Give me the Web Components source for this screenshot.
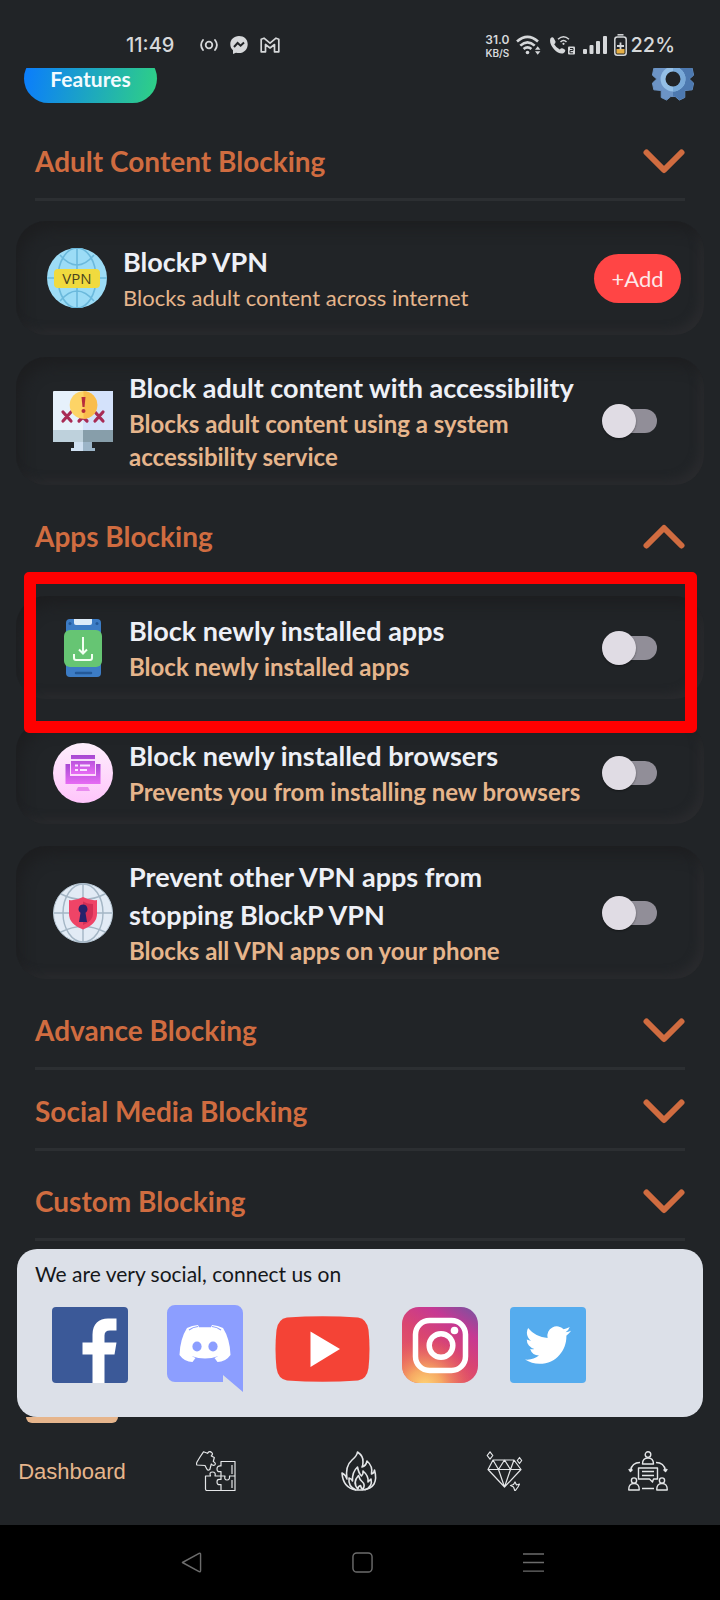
<!DOCTYPE html>
<html lang="en">
<head>
<meta charset="utf-8">
<meta name="viewport" content="width=device-width, initial-scale=1">
<title>BlockP</title>
<style>
  :root {
    --bg: #212427;
    --orange: #d06c40;
    --sand: #e6b58c;
    --line: #2c2f32;
  }
  body {
    margin: 0;
    min-height: 100vh;
    background: var(--bg);
    font-family: Lato, "Liberation Sans", sans-serif;
  }
</style>
</head>
<body>
<blockp-screen></blockp-screen>

<script>
const ICONS = {
  gear: `<svg viewBox="0 0 48 48"><path id="g" fill="#6c94c6" stroke="#6c94c6" stroke-linejoin="round" d="M45.500 20l-4.500 4 4.500 4.300-1.500 7-7.700.7v7.300L30.700 46l-4.400-3.700h-4.600L17.300 46l-5.600-2.700V36L4 35.300l-1.500-7L7 24l-4.500-4L4 12.700l7.700-.7V4.700L17.300 2l4.400 3.700h4.600L30.700 2l5.600 2.700V12l7.700.7z"/>
    <path d="M26.300 42.300l4.400 3.700 5.600-2.700V36l7.700-.7 1.500-7L41 24l4.500-4-1.500-7.300-7.700-.7V4.700L30.700 2l-4.400 3.700H24v36.600z" fill="#4d79b0"/>
    <circle cx="24" cy="24" r="13" fill="#94bfe6"/><path d="M24 11a13 13 0 0 1 0 26z" fill="#79a9d8"/>
    <circle cx="24" cy="24" r="7.800" fill="#212427"/></svg>`,
  hotspot: `<svg viewBox="0 0 18 16" fill="none" stroke="currentColor" stroke-width="1.800" stroke-linecap="round"><circle cx="9" cy="8" r="3.300"/><path d="M3 3Q-.8 8 3 13M15 3Q18.800 8 15 13"/></svg>`,
  messenger: `<svg viewBox="0 0 18 18"><path fill="currentColor" d="M9 0C3.800 0 .3 3.600.3 8.300c0 2.600 1 4.600 2.700 6V18l3-1.300q1.400.4 3 .4c5.200 0 8.700-3.700 8.700-8.800S14.200 0 9 0z"/><path d="M4 11l3.600-4 3 2.700L14 6.500" fill="none" stroke="#212427" stroke-width="2"/></svg>`,
  gmail: `<svg viewBox="0 0 20 16" fill="none" stroke="currentColor" stroke-width="1.700" stroke-linejoin="round"><path d="M1.200 14.800V2.200L4 1.200l6 5 6-5 2.800 1v12.600H14.500V7.500L10 11 5.500 7.500v7.300z"/></svg>`,
  wifi: `<svg viewBox="0 0 26 20" fill="none" stroke="currentColor" stroke-width="2.600"><path d="M1 6.500Q11.500-2.800 22 6.500M4.300 10.600Q11.500 4 18.700 10.600M7.600 14Q11.500 10.600 15.400 14"/><circle cx="11.500" cy="17.500" r="1.800" fill="currentColor" stroke="none"/><path d="M19 14.800l2.700-3.500 2.700 3.500zM19 16.300l2.700 3.500 2.700-3.500z" fill="currentColor" stroke="none"/></svg>`,
  call: `<svg viewBox="0 0 27 20"><path fill="currentColor" d="M1.500 3.200Q3.500 1.500 4.800 3.300L6.500 6.500Q6.800 8 5.200 9.200q2 3.600 5.600 5.200Q12.300 12.600 14 13.500l2 1.300q1 1.800-1.600 3.500Q10 19.500 5 14.200-.3 8 1.500 3.200z"/><g fill="none" stroke="currentColor" stroke-width="1.500"><path d="M9 4.300Q14.500-.8 20 4.300M11.500 7Q14.500 4 17.500 7"/></g><circle cx="14.500" cy="8.800" r="1.100" fill="currentColor"/><rect x="19" y="11.500" width="7" height="8" rx="1" fill="currentColor"/><path d="M21 13.500h3v2h-3v2.300h3" fill="none" stroke="#212427"/></svg>`,
  signal: `<svg viewBox="0 0 24 18" fill="currentColor"><rect y="13" width="4" height="5" rx="1"/><rect x="6.500" y="9" width="4" height="9" rx="1"/><rect x="13" y="5" width="4" height="13" rx="1"/><rect x="20" width="4" height="18" rx="1"/></svg>`,
  battery: `<svg viewBox="0 0 13 22"><path d="M3.500.8h6" stroke="currentColor" stroke-width="1.500"/><rect x=".8" y="3" width="11.400" height="18.200" rx="2.500" fill="none" stroke="currentColor" stroke-width="1.500"/><path d="M2.500 15h8v4.500h-8z" fill="#e5ae45"/><path d="M6.500 8.500v7M3 12h7" stroke="currentColor" stroke-width="1.800"/></svg>`,
  vpn: `<svg viewBox="0 0 60 60"><circle cx="30" cy="30" r="30" fill="#9cdcf6"/><g fill="none" stroke="#6bb9dc" stroke-width="1.600"><ellipse cx="30" cy="30" rx="19" ry="30"/><path d="M30 0v60M0 30h60M13 7Q30 27 47 7M13 53Q30 33 47 53"/></g><rect x="7" y="21" width="46" height="19" rx="4" fill="#f0da3e"/><text x="30" y="36" text-anchor="middle" font-family="Open Sans, sans-serif" font-size="15" fill="#4a4320">VPN</text></svg>`,
  monitor: `<svg viewBox="0 0 60 60"><rect width="60" height="51" rx="1" fill="#e6f1fb"/><path d="M30 0h30v39H30z" fill="#d4e2fb"/><path d="M0 39h30v12H0z" fill="#bed1dc"/><path d="M30 39h30v12H30z" fill="#879eaa"/><path d="M21 51h18v6h3v3H18v-3h3z" fill="#d0e1f2"/><path d="M30 51h9v6h3v3H30z" fill="#9cb5c8"/><g fill="none" stroke="#a82b55" stroke-width="3.200" stroke-linecap="round"><path d="M10 21l8 9m0-9l-8 9M42 21l8 9m0-9l-8 9M26 30l4-4 4 4"/></g><circle cx="30.500" cy="14" r="13.800" fill="#fdd466"/><path d="M30.500.2a13.800 13.800 0 0 1 0 27.600z" fill="#f9bd4c"/><path d="M28.500 6h4l-1 10h-2z" fill="#b72c3b"/><circle cx="30.500" cy="20" r="2" fill="#b72c3b"/></svg>`,
  phone: `<svg viewBox="0 0 60 60"><rect x="13" y="1" width="35" height="58" rx="4" fill="#3c7cc5"/><path d="M21 1h18v4q0 2-2 2H23q-2 0-2-2z" fill="#dcebf8"/><circle cx="17" cy="5.500" r="1.500" fill="#235999"/><circle cx="44" cy="5.500" r="1.500" fill="#235999"/><path d="M23 55h15" stroke="#235999" stroke-width="2.500" stroke-linecap="round"/><rect x="11" y="12" width="38" height="37" rx="6" fill="#66c573"/><path d="M30 19v16m-4-3.500l4 4 4-4M21 36v4q0 2 2 2h14q2 0 2-2v-4" fill="none" stroke="#f2fff2" stroke-width="2"/></svg>`,
  browser: `<svg viewBox="0 0 60 60"><linearGradient id="bg" x2="0" y2="1"><stop stop-color="#fdeffc"/><stop offset="1" stop-color="#ffc5fb"/></linearGradient><linearGradient id="fg" x2="0" y2="1"><stop stop-color="#a648d2"/><stop offset="1" stop-color="#e76bf4"/></linearGradient><circle cx="30" cy="30" r="30" fill="url(#bg)"/><path d="M12.500 21H17v12h26V21h4.500v20h-35z" fill="url(#fg)"/><path d="M18 12h24v19H18z" fill="url(#fg)"/><path d="M18 17h24" stroke="#f6dcfa" stroke-width="2"/><path d="M22 22.500h3m2 0h10M22 27h3m2 0h7" stroke="#fae3ff" stroke-width="1.800"/><path d="M25 44h10l2 4H23z" fill="#e98bef"/></svg>`,
  shield: `<svg viewBox="0 0 60 60"><circle cx="30" cy="30" r="29.500" fill="#e2ebf5" stroke="#b9c9d6"/><g fill="none" stroke="#a4b6c5" stroke-width="1.400"><ellipse cx="30" cy="30" rx="20" ry="29"/><path d="M30 1v58M1 30h58M8 11Q30 22 52 11M8 49Q30 38 52 49"/></g><path d="M30 14q7 4 14 3v14q0 10-14 15.500Q16 41 16 31V17q7 1 14-3z" fill="#ef4467"/><path d="M30 18.500q5 2.700 10 2.500v10q0 7-10 11z" fill="#d32f56"/><path d="M30 21.500a4.500 4.500 0 0 1 2.500 8.200L34 39h-8l1.500-9.300A4.500 4.500 0 0 1 30 21.500z" fill="#26226b"/></svg>`,
  facebook: `<svg viewBox="0 -2 76 87"><rect width="76" height="76" rx="4" fill="#3b5998"/><path d="M40.500 76V47.500h-10v-12h10v-8C40.500 17 47 11.500 56 11.500h8.500v12H58q-5.500 0-5.500 5v7h12l-2 12h-10V76z" fill="#fff"/></svg>`,
  discord: `<svg viewBox="0 0 83 87"><path d="M15 0h60a8 8 0 0 1 8 8v79L63 70v7H15a8 8 0 0 1-8-8V8a8 8 0 0 1 8-8z" fill="#8c9eff"/><path d="M27 23q5-2.500 11-3l1 2.300h12l1-2.300q6 .5 11 3 7 11 7.500 27-5 7-13 7l-3-4 4-2q-13.500 5-27 0l4 2-3 4q-8 0-13-7Q20 34 27 23z" fill="#fff"/><path d="M29 25q4-3 9-3.500m23 3.500q-4-3-9-3.500" fill="none" stroke="#8c9eff" stroke-width="1.200"/><ellipse cx="37" cy="41.500" rx="4.600" ry="5" fill="#8c9eff"/><ellipse cx="53" cy="41.500" rx="4.600" ry="5" fill="#8c9eff"/></svg>`,
  youtube: `<svg viewBox="0 -11 95 87"><path d="M12 1.500Q47.500-1 83 1.500 92 3 93.500 14q2 19 0 38Q92 63 83 64.500q-35.500 2.500-71 0Q3 63 1.500 52q-2-19 0-38Q3 3 12 1.500z" fill="#f44336"/><path d="M35.500 15.500L65 33 35.500 51z" fill="#fff"/></svg>`,
  instagram: `<svg viewBox="0 -2 76 87"><linearGradient id="a" x1=".9" y1="0" x2=".25" y2="1"><stop stop-color="#80509f"/><stop offset=".25" stop-color="#c63893"/><stop offset=".55" stop-color="#da4670"/><stop offset="1" stop-color="#e9605c"/></linearGradient><radialGradient id="b" cx=".3" cy="1.050" r=".65"><stop stop-color="#ffd675"/><stop offset=".35" stop-color="#f6a963"/><stop offset="1" stop-color="#e9605c" stop-opacity="0"/></radialGradient><rect width="76" height="76" rx="17" fill="url(#a)"/><rect width="76" height="76" rx="17" fill="url(#b)"/><g fill="none" stroke="#fff" stroke-width="5.500"><rect x="13.500" y="13.500" width="50" height="50" rx="14"/><circle cx="39" cy="38.500" r="11.800"/></g><circle cx="52.500" cy="23.500" r="3.800" fill="#fff"/></svg>`,
  twitter: `<svg viewBox="0 -2 76 87"><rect width="76" height="76" rx="4" fill="#55acee"/><path transform="translate(15 15) scale(1.920)" d="M23.950 4.570a10 10 0 0 1-2.820.770 4.960 4.960 0 0 0 2.160-2.720c-.95.550-2 .960-3.130 1.180a4.920 4.920 0 0 0-8.380 4.480C7.690 8.090 4.070 6.130 1.640 3.160a4.820 4.820 0 0 0-.67 2.480c0 1.710.87 3.210 2.190 4.100a4.900 4.900 0 0 1-2.230-.620v.06a4.920 4.920 0 0 0 3.950 4.830 5 5 0 0 1-2.210.08 4.940 4.940 0 0 0 4.600 3.420A9.870 9.870 0 0 1 0 19.540a14 14 0 0 0 7.550 2.210c9.050 0 14-7.500 14-13.990 0-.21 0-.420-.02-.630a9.940 9.940 0 0 0 2.460-2.550z" fill="#fff"/></svg>`,
  puzzle: `<svg viewBox="0 0 40 40" fill="none" stroke="currentColor" stroke-width="1.200" stroke-linejoin="round"><path d="M25 10.500h14v29H11q-1.500 0-1.500-1.500V25h5q-1.500-4 2-4t2.500 4H25v-4.500q-4 1-4-2.500t4-3zM25 25v3.500q-4-1-4 2.500t4 2.500v6M25 25h4q-1 4 2 4t2.500-4H39M36 14v9M36 29v8"/><path d="M7.500.8l4 1.500q2-3 4-.8 2 1-.2 3.500l3 1.500-1 4q3 1.500 1.500 3.500-2 1-3.500-1l-1.500 5.500q-2 1.500-3-.5L9 14.500 1 14q-1-1 0-3l3-5z"/></svg>`,
  flame: `<svg viewBox="0 0 40 40" fill="none" stroke="currentColor" stroke-width="1.600" stroke-linejoin="round"><path d="M16 39Q3 37 2 22q4 2 5 6Q5 15 12 9q5-4 5.500-8 6 4 5.500 10 0 3-1 5 4-1 5-6 6 5 4.500 13 3-1 3-4 5 18-12 20z"/><path d="M16 39q-8-3-7-12 3 1 3.500 3-.5-9 5-14 1 6 4 9 2-2 1.500-5 6 5 5 11l3-3q2 8-6.500 11M18 38.500q-6-7 .5-14 1 4 4 6.500t.5 7.500q-2-1-2.500-4-3 1-2.500 4"/></svg>`,
  diamond: `<svg viewBox="0 0 40 40" fill="none" stroke="currentColor" stroke-width="1.200" stroke-linejoin="round"><path d="M9 9h21l7 9.500L20.500 36 4 18.500zM4 18.500h33M9 9l5.500 9.500L20.500 9l6 9.500L30 9M14.500 18.500l6 17.500 6-17.500M6 .8l2.800 3.700L6 8.200 3.200 4.500zM35.500 6.500l2.200 3-2.200 3-2.200-3zM31 31l1.500 3 3-1-1.500 3-3 4-1.500-4-3-1.500 3-1z"/></svg>`,
  community: `<svg viewBox="0 0 40 40" fill="none" stroke="currentColor" stroke-width="1.400" stroke-linejoin="round"><circle cx="20" cy="3.600" r="2.800"/><path d="M14.500 13q0-6 5.500-6t5.500 6zM10.500 17h19v11h-4l-1 3-3-3h-11zM14 20.500h12M14 24.500h12M12 11.500q-8 0-9.500 8M28 11.500q8 0 9.500 8M.8 18l1.700 2.500 2-2M35.500 18.500l2 2 1.700-2.500M14 37.500h12"/><circle cx="6" cy="29.500" r="2.600"/><path d="M.8 39q-.3-6.500 5.200-6.500t5.200 6.500z"/><circle cx="34" cy="29.500" r="2.600"/><path d="M28.800 39q-.3-6.500 5.200-6.500t5.200 6.500z"/></svg>`,
  back: `<svg viewBox="0 0 22 22" fill="none" stroke="currentColor" stroke-width="1.500" stroke-linejoin="round"><path d="M1.500 11L19 1.500q1.500-.5 1.500 1v17q0 1.500-1.500 1z"/></svg>`,
  home: `<svg viewBox="0 0 22 22" fill="none" stroke="currentColor" stroke-width="1.500"><rect x="1" y="1" width="20" height="20" rx="4"/></svg>`,
  recents: `<svg viewBox="0 0 22 22" fill="none" stroke="currentColor" stroke-width="1.500"><path d="M0 2h22M0 11h22M0 20h22"/></svg>`,
};

function define(name, cls) {
  if (!customElements.get(name)) customElements.define(name, cls);
}

class AppIcon extends HTMLElement {
  connectedCallback() {
    if (this.shadowRoot) return;
    this.attachShadow({ mode: "open" }).innerHTML = `
      <style>
        :host { display: block; flex: none; }
        svg { display: block; width: 100%; height: 100%; }
      </style>
      ${ICONS[this.getAttribute("name")] || ""}`;
  }
}

class StatusBar extends HTMLElement {
  connectedCallback() {
    if (this.shadowRoot) return;
    this.attachShadow({ mode: "open" }).innerHTML = `
      <style>
        :host {
          display: flex;
          justify-content: space-between;
          align-items: center;
          height: 46px;
          padding: 22px 45px 0 126px;
          color: #d6d8da;
          font-family: Inter, "Liberation Sans", sans-serif;
          font-size: 20px;
          font-weight: 500;
        }
        .group { display: flex; align-items: center; }
        .notices { gap: 12px; }
        .time { margin-right: 14px; }
        .system { gap: 7px; }
        .speed { display: flex; flex-direction: column; align-items: center; font-size: 10px; line-height: 12px; font-weight: 600; }
        .speed b { font-size: 12px; line-height: 15px; font-weight: 600; }
        .charge { display: flex; align-items: center; gap: 3px; }
      </style>
      <div class="group notices">
        <span class="time">11:49</span>
        <app-icon name="hotspot" style="width:18px;height:16px"></app-icon>
        <app-icon name="messenger" style="width:18px;height:18px"></app-icon>
        <app-icon name="gmail" style="width:20px;height:16px"></app-icon>
      </div>
      <div class="group system">
        <span class="speed"><b>31.0</b><span>KB/S</span></span>
        <app-icon name="wifi" style="width:26px;height:20px"></app-icon>
        <app-icon name="call" style="width:27px;height:20px"></app-icon>
        <app-icon name="signal" style="width:24px;height:18px"></app-icon>
        <span class="charge"><app-icon name="battery" style="width:13px;height:22px"></app-icon>22%</span>
      </div>`;
  }
}

class TopBar extends HTMLElement {
  connectedCallback() {
    if (this.shadowRoot) return;
    this.attachShadow({ mode: "open" }).innerHTML = `
      <style>
        /* the row is scrolled half under the status bar */
        :host {
          display: flex;
          align-items: flex-end;
          height: 35px;
          overflow: hidden;
          padding: 0 24px;
          margin-bottom: 17px;
        }
        .row { flex: 1; display: flex; justify-content: space-between; align-items: center; }
        button { border: 0; padding: 0; font: inherit; background: none; cursor: pointer; }
        .pill {
          width: 133px;
          height: 49px;
          border-radius: 25px;
          background: linear-gradient(100deg, #0a7bff, #2fd184);
          color: #f2fbff;
          font-size: 21px;
          font-weight: 700;
        }
        app-icon { width: 46px; height: 46px; }
      </style>
      <div class="row">
        <button class="pill">Features</button>
        <button aria-label="Settings"><app-icon name="gear"></app-icon></button>
      </div>`;
  }
}

class BlockSection extends HTMLElement {
  connectedCallback() {
    if (this.shadowRoot) return;
    const open = this.hasAttribute("expanded");
    const arrow = open ? "M3.500 21.500L21 4l17.500 17.500" : "M3.500 3.500L21 21l17.500-17.500";
    this.attachShadow({ mode: "open" }).innerHTML = `
      <style>
        :host { display: block; }
        :host([spaced]) { margin-top: 9px; }
        h2 { margin: 0 35px; font-size: 28px; border-bottom: 3px solid var(--line); }
        :host([expanded]) h2 { border-color: transparent; }
        button {
          display: flex;
          justify-content: space-between;
          align-items: center;
          width: 100%;
          border: 0;
          padding: 22px 0 18px;
          background: none;
          color: var(--orange);
          font: inherit;
          font-weight: 700;
          line-height: 38px;
          text-align: left;
          cursor: pointer;
        }
        svg { width: 42px; height: 25px; flex: none; }
        .body { display: flex; flex-direction: column; gap: 22px; padding: 0 16px; }
        .body.filled { padding: 20px 16px 10px; }
      </style>
      <h2><button aria-expanded="${open}">
        <span>${this.getAttribute("heading")}</span>
        <svg viewBox="0 0 42 25" fill="none" stroke="currentColor" stroke-width="6" stroke-linecap="round" stroke-linejoin="round"><path d="${arrow}"/></svg>
      </button></h2>
      <div class="body ${this.children.length ? "filled" : ""}"><slot></slot></div>`;
  }
}

class FeatureCard extends HTMLElement {
  connectedCallback() {
    if (this.shadowRoot) return;
    const action = this.getAttribute("action");
    const tag = action ? "span" : "label";
    const control = action
      ? `<button aria-describedby="title">${action}</button>`
      : `<input type="checkbox" role="switch" id="switch">`;
    this.attachShadow({ mode: "open" }).innerHTML = `
      <style>
        :host {
          display: flex;
          align-items: center;
          position: relative;
          box-sizing: border-box;
          min-height: 103px;
          padding: 12px 47px 12px 37px;
          border-radius: 30px;
          box-shadow:
            inset 8px 12px 14px -4px #1d1e20,
            inset -7px -7px 8px -2px #292a2d;
        }
        :host([action]) { min-height: 114px; padding: 12px 23px 12px 31px; }
        :host([marked]) { z-index: 1; }
        app-icon { width: 60px; height: 60px; }
        .text { flex: 1; display: block; margin: 0 16px; }
        .title { display: block; color: #eef0f6; font-size: 27px; font-weight: 700; line-height: 38px; }
        .sub { display: block; color: var(--sand); font-size: 24px; font-weight: 700; line-height: 33px; }
        :host([action]) .sub { font-size: 22px; font-weight: 400; }
        button {
          width: 87px;
          height: 49px;
          border: 0;
          border-radius: 25px;
          background: #ff4545;
          color: #fde8e8;
          font: inherit;
          font-size: 22px;
          cursor: pointer;
        }
        input {
          appearance: none;
          display: flex;
          align-items: center;
          flex: none;
          width: 52px;
          height: 24px;
          margin: 0;
          border-radius: 12px;
          background: #918e98;
          cursor: pointer;
        }
        input::before {
          content: "";
          flex: none;
          width: 34px;
          height: 34px;
          margin-left: -3px;
          border-radius: 50%;
          background: #e0dce4;
          box-shadow: 0 1px 2px #0006;
        }
        input:checked { justify-content: flex-end; background: var(--orange); }
        /* marker frame drawn over the card and its surroundings */
        .frame {
          position: absolute;
          inset: -24px 7px -34px 8px;
          border: 12px solid #f00;
          border-radius: 5px;
          pointer-events: none;
        }
      </style>
      <app-icon name="${this.getAttribute("icon")}"></app-icon>
      <${tag} class="text" id="title" ${action ? "" : `for="switch"`}>
        <span class="title">${this.getAttribute("heading")}</span>
        <span class="sub">${this.getAttribute("note")}</span>
      </${tag}>
      ${control}
      ${this.hasAttribute("marked") ? `<div class="frame"></div>` : ""}`;
  }
}

class SocialPanel extends HTMLElement {
  connectedCallback() {
    if (this.shadowRoot) return;
    this.attachShadow({ mode: "open" }).innerHTML = `
      <style>
        :host {
          display: block;
          margin: 8px 17px 0;
          padding: 8px 18px 25px;
          border-radius: 20px;
          background: #dce0e8;
          color: #15171a;
        }
        p { margin: 0 0 14px; font-size: 21px; line-height: 34px; }
        nav { display: flex; gap: 32px; padding-left: 17px; }
        app-icon { width: 76px; height: 87px; }
        app-icon[name="discord"] { width: 83px; }
        app-icon[name="youtube"] { width: 95px; }
      </style>
      <p>We are very social, connect us on</p>
      <nav aria-label="Social">
        ${["facebook", "discord", "youtube", "instagram", "twitter"]
          .map((name) => `<a href="#${name}" aria-label="${name}"><app-icon name="${name}"></app-icon></a>`)
          .join("")}
      </nav>`;
  }
}

class TabBar extends HTMLElement {
  connectedCallback() {
    if (this.shadowRoot) return;
    this.attachShadow({ mode: "open" }).innerHTML = `
      <style>
        :host { display: block; }
        nav { display: grid; grid-template-columns: repeat(5, 1fr); height: 108px; }
        a {
          display: flex;
          flex-direction: column;
          align-items: center;
          color: #e4e6e8;
          text-decoration: none;
          font: 22px "Liberation Sans", sans-serif;
        }
        a::before { content: ""; width: 92px; height: 6px; margin-bottom: 28px; border-radius: 0 0 6px 6px; }
        a span { line-height: 41px; }
        .current { color: var(--sand); }
        .current::before { background: var(--sand); }
        app-icon { width: 40px; height: 40px; }
      </style>
      <nav>
        <a class="current" href="#dashboard" aria-current="page"><span>Dashboard</span></a>
        <a href="#programs" aria-label="Programs"><app-icon name="puzzle"></app-icon></a>
        <a href="#streak" aria-label="Streak"><app-icon name="flame"></app-icon></a>
        <a href="#premium" aria-label="Premium"><app-icon name="diamond"></app-icon></a>
        <a href="#community" aria-label="Community"><app-icon name="community"></app-icon></a>
      </nav>`;
  }
}

class SystemKeys extends HTMLElement {
  connectedCallback() {
    if (this.shadowRoot) return;
    this.attachShadow({ mode: "open" }).innerHTML = `
      <style>
        :host {
          display: flex;
          justify-content: center;
          align-items: center;
          gap: 150px;
          height: 75px;
          padding-left: 4px;
          background: #000;
          color: #6c6c6c;
        }
        button { border: 0; padding: 0; background: none; color: inherit; }
        app-icon { width: 21px; height: 21px; }
      </style>
      <button aria-label="Back"><app-icon name="back"></app-icon></button>
      <button aria-label="Home"><app-icon name="home"></app-icon></button>
      <button aria-label="Recent apps"><app-icon name="recents"></app-icon></button>`;
  }
}

class BlockpScreen extends HTMLElement {
  connectedCallback() {
    if (this.shadowRoot) return;
    this.attachShadow({ mode: "open" }).innerHTML = `
      <style>
        :host { display: flex; flex-direction: column; min-height: 100vh; }
        main { flex: 1; }
      </style>
      <status-bar></status-bar>
      <top-bar></top-bar>
      <main>
        <block-section heading="Adult Content Blocking">
          <feature-card icon="vpn" heading="BlockP VPN" note="Blocks adult content across internet" action="+Add"></feature-card>
          <feature-card icon="monitor" heading="Block adult content with accessibility" note="Blocks adult content using a system accessibility service"></feature-card>
        </block-section>
        <block-section heading="Apps Blocking" expanded>
          <feature-card icon="phone" heading="Block newly installed apps" note="Block newly installed apps" marked></feature-card>
          <feature-card icon="browser" heading="Block newly installed browsers" note="Prevents you from installing new browsers"></feature-card>
          <feature-card icon="shield" heading="Prevent other VPN apps from stopping BlockP VPN" note="Blocks all VPN apps on your phone"></feature-card>
        </block-section>
        <block-section heading="Advance Blocking"></block-section>
        <block-section heading="Social Media Blocking"></block-section>
        <block-section heading="Custom Blocking" spaced></block-section>
      </main>
      <social-panel></social-panel>
      <tab-bar></tab-bar>
      <system-keys></system-keys>`;
  }
}

define("app-icon", AppIcon);
define("status-bar", StatusBar);
define("top-bar", TopBar);
define("feature-card", FeatureCard);
define("block-section", BlockSection);
define("social-panel", SocialPanel);
define("tab-bar", TabBar);
define("system-keys", SystemKeys);
define("blockp-screen", BlockpScreen);
</script>
</body>
</html>
